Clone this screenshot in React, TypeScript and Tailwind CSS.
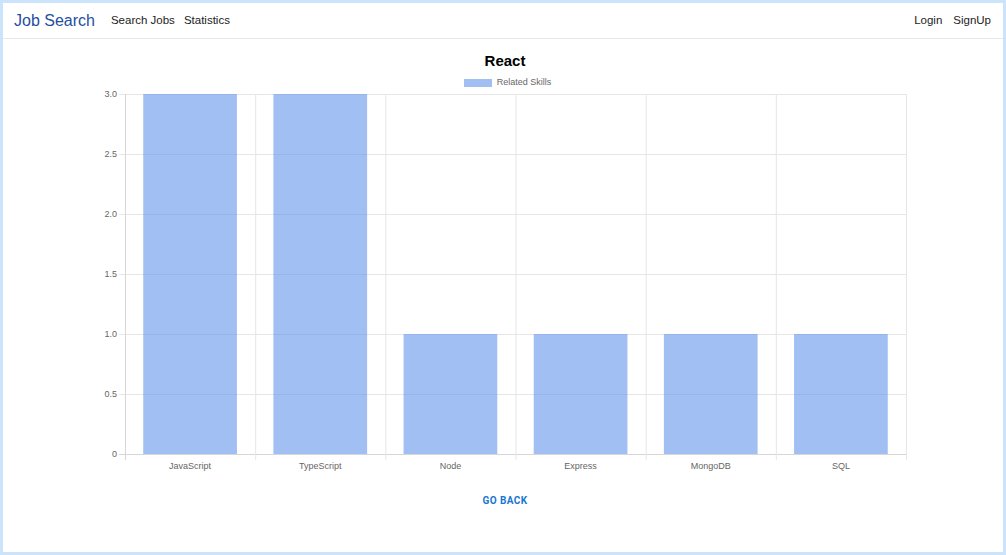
import React from "react";

const skills = [
  { name: "JavaScript", count: 3 },
  { name: "TypeScript", count: 3 },
  { name: "Node", count: 1 },
  { name: "Express", count: 1 },
  { name: "MongoDB", count: 1 },
  { name: "SQL", count: 1 },
];

// plot area inside the svg
const PL = 25;
const PR = 806;
const PT = 4;
const PB = 364;
const MAX = 3;
const yTicks = [0, 0.5, 1, 1.5, 2, 2.5, 3];

const SkillChart = () => {
  const slot = (PR - PL) / skills.length;
  const barW = slot * 0.72;
  const y = (v: number) => PB - (v / MAX) * (PB - PT);

  return (
    <svg width={810} height={390} className="block" style={{ fontFamily: "'Liberation Sans', Arial, sans-serif" }}>
      {/* horizontal grid + y ticks */}
      {yTicks.map((t) => (
        <g key={t}>
          <line x1={PL - 6} x2={PR} y1={y(t) + 0.5} y2={y(t) + 0.5} stroke={t === 0 ? "#d6d6d6" : "#e6e6e6"} />
          <text x={17} y={y(t) + 3} fontSize={9} fill="#666" textAnchor="end">
            {t === 0 ? "0" : t.toFixed(1)}
          </text>
        </g>
      ))}
      {/* vertical grid */}
      {skills.concat([{ name: "", count: 0 }]).map((_, i) => (
        <line
          key={i}
          x1={PL + i * slot + 0.5}
          x2={PL + i * slot + 0.5}
          y1={PT}
          y2={PB + 6}
          stroke={i === 0 ? "#d6d6d6" : "#e6e6e6"}
        />
      ))}
      {/* bars */}
      {skills.map((s, i) => {
        const cx = PL + i * slot + slot / 2;
        return (
          <g key={s.name}>
            <rect
              x={cx - barW / 2}
              y={y(s.count)}
              width={barW}
              height={PB - y(s.count)}
              fill="rgba(100,149,237,0.6)"
            />
            <text x={cx} y={PB + 15} fontSize={9} fill="#666" textAnchor="middle">
              {s.name}
            </text>
          </g>
        );
      })}
    </svg>
  );
};

export default function App() {
  return (
    <div className="h-screen w-full border-[3px] border-[#cbe3fb] bg-white flex flex-col font-['Liberation_Sans',Arial,sans-serif]">
      <nav className="flex items-center h-[36px] shrink-0 border-b border-[#e8e8e8] pl-[11px] pr-[12px]">
        <span className="text-[16px] text-[#1f4ea3] mr-[16px]">Job Search</span>
        <a className="text-[11.5px] text-[#222] mr-[9px]">Search Jobs</a>
        <a className="text-[11.5px] text-[#222]">Statistics</a>
        <div className="ml-auto flex gap-[11px]">
          <a className="text-[11.5px] text-[#222]">Login</a>
          <a className="text-[11.5px] text-[#222]">SignUp</a>
        </div>
      </nav>

      <main className="flex flex-col items-center">
        <div className="w-[810px] ml-[4px] flex flex-col items-center">
          <h1 className="mt-[12px] h-[20px] leading-[20px] text-[15px] font-bold text-black">React</h1>
          <div className="mt-[5px] ml-[5px] h-[14px] flex items-center gap-[5px]">
            <span className="w-[28px] h-[8px] bg-[#a2bff4]" />
            <span className="text-[9px] text-[#666]">Related Skills</span>
          </div>
          <div>
            <SkillChart />
          </div>
        </div>
        <button className="mt-[13px] ml-[4px] text-[10px] font-bold tracking-[0.04em] text-[#1976d2] font-['Roboto',sans-serif]">
          GO BACK
        </button>
      </main>
    </div>
  );
}
